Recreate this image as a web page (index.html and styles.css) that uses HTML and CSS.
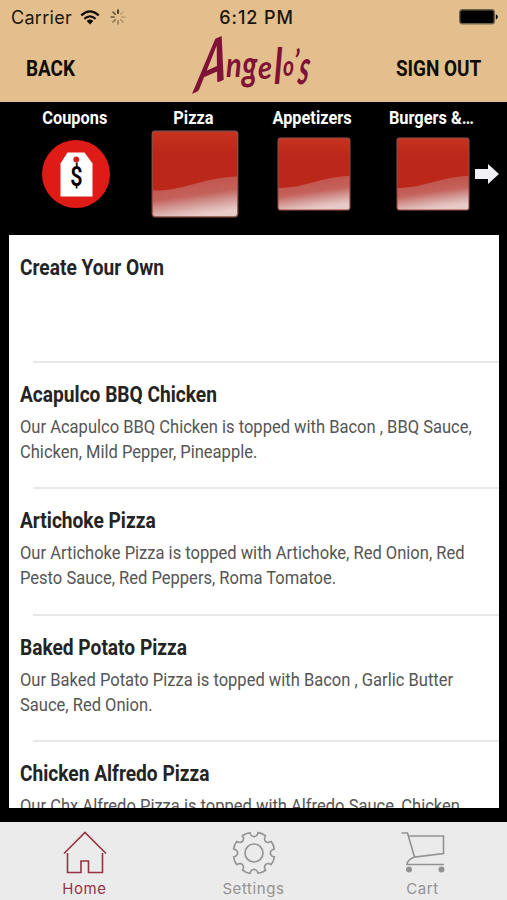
FILE: index.html
```html
<!DOCTYPE html>
<html lang="en">
<head>
<meta charset="utf-8">
<meta name="viewport" content="width=device-width, initial-scale=1">
<title>Angelo's</title>
<link rel="stylesheet" href="styles.css">
</head>
<body>
<div class="app">
  <header class="header">
    <div class="status">
      <div class="carrier">
        <span>Carrier</span>
        <svg class="wifi" width="20" height="15" viewBox="0 0 20 15"><g fill="none" stroke="#100c06" stroke-width="2.1"><path d="M1.2 5.4Q10-2.6 18.8 5.4"/><path d="M4.4 8.9Q10 3.9 15.6 8.9"/></g><path d="M6.7 11Q10 8.2 13.3 11L10 14.4Z" fill="#100c06"/></svg>
        <svg class="spinner" width="16" height="16" viewBox="-8 -8 16 16" stroke="#5c4a35" stroke-width="1.5" stroke-linecap="round"><path d="M0-3.8V-7" stroke="#1c150c"/><path d="M2.7-2.7 5-5" opacity=".25"/><path d="M3.8 0H7" opacity=".3"/><path d="M2.7 2.7 5 5" opacity=".4"/><path d="M0 3.8V7" opacity=".6"/><path d="M-2.7 2.7-5 5" opacity=".7"/><path d="M-3.8 0H-7" opacity=".85"/><path d="M-2.7-2.7-5-5"/></svg>
      </div>
      <time class="clock">6:12 PM</time>
      <svg class="battery" width="39" height="16" viewBox="0 0 39 16"><rect x=".7" y=".7" width="34.6" height="14.1" rx="2.5" fill="#000" stroke="#71624a" stroke-width="1.4"/><path d="M36.8 5.2q2 .5 2 2.6t-2 2.6Z" fill="#000"/></svg>
    </div>
    <nav class="topnav">
      <a class="navlink"><span class="cond">BACK</span></a>
      <svg class="logo" width="124" height="62" viewBox="0 0 124 62" role="img" aria-label="Angelo's">
        <g class="logo-text">
          <text font-size="62" transform="translate(2 56) skewY(-24) skewX(-8) scale(.78 1)">A</text>
          <text font-size="34" transform="translate(34 40) scale(.85 1)">n</text>
          <text font-size="38" transform="translate(50 43) scale(.8 1.1)">g</text>
          <text font-size="32" transform="translate(66 42) scale(.9 1)">e</text>
          <text font-size="50" transform="translate(82 47) scale(.7 1)">l</text>
          <text font-size="28" transform="translate(91 39) scale(.75 1)">o</text>
          <text font-size="32" transform="translate(102 36) scale(.8 1)">’</text>
          <text font-size="48" transform="translate(105 47) skewX(-8) scale(.55 1)">s</text>
        </g>
      </svg>
      <a class="navlink end"><span class="cond">SIGN OUT</span></a>
    </nav>
  </header>

  <section class="categories">
    <div class="category">
      <div class="label"><span class="cond">Coupons</span></div>
      <div class="thumb"><svg width="68" height="68" viewBox="0 0 68 68"><circle cx="34" cy="34" r="34" fill="#df1b17"/><path d="M25.500 12.500H42.500L50.500 23.500V56.500H18.500V23.500Z" fill="#fff"/><circle cx="34.300" cy="19.500" r="2.900" fill="#df1b17"/><text transform="translate(34.500 46) scale(.8 1)" class="dollar">$</text></svg></div>
    </div>
    <div class="category">
      <div class="label"><span class="cond">Pizza</span></div>
      <div class="thumb"><svg class="tile" width="88" height="88" viewBox="0 0 72 72"><use href="#tile"/></svg></div>
    </div>
    <div class="category">
      <div class="label"><span class="cond">Appetizers</span></div>
      <div class="thumb"><svg class="tile" width="74" height="74" viewBox="0 0 72 72">
        <defs>
          <linearGradient id="base" x1="0" y1="0" x2="0" y2="1"><stop offset="0" stop-color="#c8321f"/><stop offset=".25" stop-color="#bb2719"/><stop offset="1" stop-color="#bb2719"/></linearGradient>
          <linearGradient id="shine" gradientUnits="userSpaceOnUse" x1="34" y1="42" x2="38" y2="70"><stop offset="0" stop-color="#c1554d"/><stop offset=".4" stop-color="#c4625b"/><stop offset=".62" stop-color="#d08f8b"/><stop offset=".85" stop-color="#dfb8b5"/><stop offset="1" stop-color="#e9cbc9"/></linearGradient>
          <g id="tile"><rect x="1" y="1" width="70" height="70" rx="2.500" fill="url(#base)" stroke="#87574e" stroke-width="1"/><path d="M1.500 49.500C27 50 41 39 70.500 38V68.500Q70.500 70.500 68.500 70.500H3.500Q1.500 70.500 1.500 68.500Z" fill="url(#shine)"/></g>
        </defs><use href="#tile"/></svg></div>
    </div>
    <div class="category">
      <div class="label"><span class="cond">Burgers &amp;…</span></div>
      <div class="thumb"><svg class="tile" width="74" height="74" viewBox="0 0 72 72"><use href="#tile"/></svg></div>
    </div>
    <svg class="next" width="24" height="20" viewBox="0 0 24 20"><path d="M0 5H13V0L24 10 13 20V15H0Z" fill="#f1f1f5"/></svg>
  </section>

  <main class="menu">
    <article class="item"><h2><span class="cond">Create Your Own</span></h2></article>
    <article class="item"><h2><span class="cond">Acapulco BBQ Chicken</span></h2><p class="cond">Our Acapulco BBQ Chicken is topped with Bacon , BBQ Sauce,<br>Chicken, Mild Pepper, Pineapple.</p></article>
    <article class="item"><h2><span class="cond">Artichoke Pizza</span></h2><p class="cond">Our Artichoke Pizza is topped with Artichoke, Red Onion, Red<br>Pesto Sauce, Red Peppers, Roma Tomatoe.</p></article>
    <article class="item"><h2><span class="cond">Baked Potato Pizza</span></h2><p class="cond">Our Baked Potato Pizza is topped with Bacon , Garlic Butter<br>Sauce, Red Onion.</p></article>
    <article class="item"><h2><span class="cond">Chicken Alfredo Pizza</span></h2><p class="cond">Our Chx Alfredo Pizza is topped with Alfredo Sauce, Chicken,</p></article>
  </main>

  <footer class="tabs">
    <a class="tab active"><svg width="46" height="46" viewBox="0 0 46 46"><path d="M2 23.500 23 2.500 44 23.500M5.500 23V42.500H19V31H26.500V42.500H40.500V23"/></svg><span>Home</span></a>
    <a class="tab"><svg width="46" height="46" viewBox="-23 -23 46 46"><defs><path id="tooth" d="M-3-17.800Q0-14.800 3-17.800L4-20.400Q8-19.900 11.500-17.200L10.460-14.700"/></defs><use href="#tooth"/><use href="#tooth" transform="rotate(45)"/><use href="#tooth" transform="rotate(90)"/><use href="#tooth" transform="rotate(135)"/><use href="#tooth" transform="rotate(180)"/><use href="#tooth" transform="rotate(225)"/><use href="#tooth" transform="rotate(270)"/><use href="#tooth" transform="rotate(315)"/><circle r="9"/></svg><span>Settings</span></a>
    <a class="tab"><svg width="46" height="46" viewBox="0 0 46 46"><path d="M1.500 3H7.500L14.500 27 43.500 23.500V6H8.500M14.500 27Q7 30 7 34.500H44"/><circle class="wheel" cx="9" cy="39.500" r="2.200"/><circle class="wheel" cx="41.500" cy="39.500" r="2.200"/></svg><span>Cart</span></a>
  </footer>
</div>
</body>
</html>
```
FILE: styles.css
```css
* { box-sizing: border-box; }
body { margin: 0; background: #000; font-family: Roboto, sans-serif; }
svg { display: block; flex: none; }
.app { width: 507px; height: 900px; display: flex; flex-direction: column; overflow: hidden; }
.cond { display: inline-block; transform: scaleX(.87); white-space: nowrap; }

.header { height: 102px; background: #e3bf8d; flex: none; }
.status { height: 34px; display: grid; grid-template-columns: 1fr auto 1fr; align-items: center; padding: 0 9px 0 11px; font-family: Inter, sans-serif; color: #1b150d; }
.carrier { display: flex; align-items: center; font-size: 18px; letter-spacing: .3px; }
.wifi { margin-left: 8px; }
.spinner { margin-left: 10px; }
.clock { font-size: 18px; font-weight: 500; letter-spacing: .9px; margin-left: 4px; }
.battery { justify-self: end; }
.topnav { height: 68px; display: grid; grid-template-columns: 1fr 124px 1fr; align-items: center; padding: 0 26px; }
.navlink { font-size: 22px; font-weight: 700; color: #100c06; }
.navlink .cond { transform: scaleX(.86); transform-origin: left; }
.navlink.end { text-align: right; }
.navlink.end .cond { transform-origin: right; }
.logo { overflow: visible; }
.logo-text { font-family: Lato, sans-serif; font-style: italic; font-weight: 700; fill: #7f1237; }

.categories { position: relative; height: 133px; flex: none; display: grid; grid-template-columns: repeat(4, 119px); padding-left: 15px; }
.category { text-align: center; color: #fff; }
.label { height: 30px; line-height: 31px; font-size: 19px; font-weight: 700; }
.label .cond { transform: scaleX(.86); }
.thumb { height: 84px; display: flex; align-items: center; justify-content: center; position: relative; left: 1px; }
.dollar { font-family: Roboto, sans-serif; font-size: 27px; font-weight: 600; text-anchor: middle; }
.next { position: absolute; right: 8px; top: 62px; }

.menu { height: 573px; flex: none; margin: 0 8px 0 9px; background: #fff; overflow: hidden; }
.item { position: relative; height: 126.600px; padding: 18px 0 0 11px; }
.item::after { content: ""; display: block; position: absolute; left: 24px; right: 0; bottom: -1px; height: 2px; background: #e8e8e8; }
.item h2 { margin: 0; height: 30px; line-height: 30px; font-size: 22px; font-weight: 700; color: #242424; }
.item .cond { transform-origin: left; }
.item p { margin: 4px 0 0; font-size: 19px; line-height: 25px; color: #555; }

.tabs { height: 78px; flex: none; margin-top: 14px; background: #ebebeb; display: grid; grid-template-columns: repeat(3, 1fr); font-family: Inter, sans-serif; }
.tab { display: flex; flex-direction: column; align-items: center; padding-top: 8px; color: #929292; font-size: 15px; letter-spacing: .6px; }
.tab span { line-height: 20px; margin-top: 3px; }
.tab svg { fill: none; stroke: currentColor; stroke-width: 1.600; }
.tab .wheel { fill: currentColor; }
.tab.active { color: #943443; }
```
